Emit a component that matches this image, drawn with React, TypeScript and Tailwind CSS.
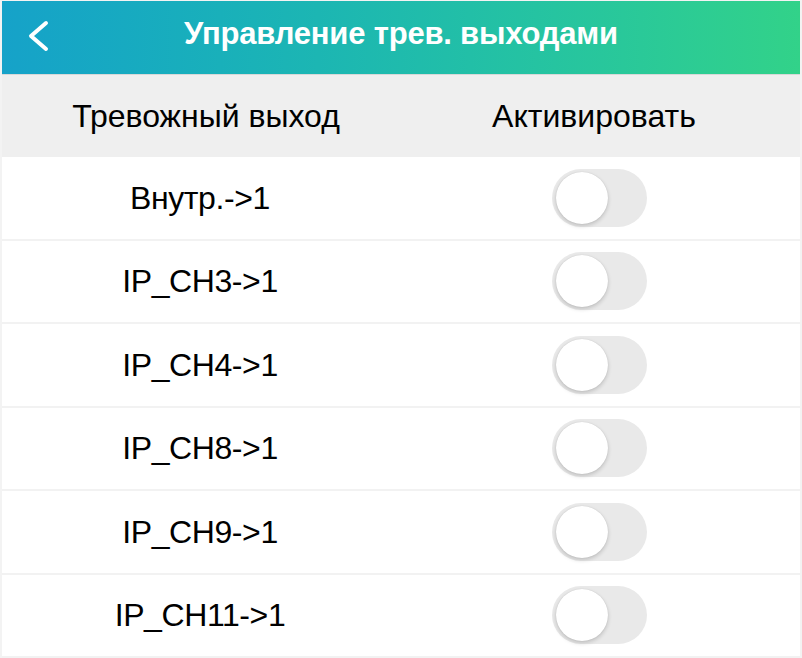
import React from "react";

const rows = [
	"Внутр.->1",
	"IP_CH3->1",
	"IP_CH4->1",
	"IP_CH8->1",
	"IP_CH9->1",
	"IP_CH11->1",
];

const Toggle = () => (
	<div className="relative h-[58px] w-[95px] rounded-full bg-[#e9e9e9]">
		<div className="absolute left-[4px] top-[3px] h-[52px] w-[52px] rounded-full bg-white shadow-[0_2px_4px_rgba(0,0,0,0.18),0_0_1px_rgba(0,0,0,0.15)]" />
	</div>
);

export default function App() {
	return (
		<div
			className="h-[658px] w-[802px] overflow-hidden bg-[#f3f3f3] px-[2px] pt-px"
			style={{ fontFamily: '"Liberation Sans", Arial, sans-serif' }}
		>
			<div className="relative flex h-[73px] items-center justify-center bg-gradient-to-r from-[#16a2c9] to-[#32d289] pb-[6px]">
				<svg
					className="absolute left-[22px] top-[19px]"
					width="28"
					height="32"
					viewBox="0 0 28 32"
					fill="none"
				>
					<path
						d="M22 3 L7 16 L22 29"
						stroke="white"
						strokeWidth="4"
						strokeLinecap="round"
						strokeLinejoin="round"
					/>
				</svg>
				<h1 className="text-[31px] font-bold tracking-[-0.2px] text-white">
					Управление трев. выходами
				</h1>
			</div>
			<div className="flex h-[83px] items-center border-t border-[#d8d8d8] bg-[#efefef] text-[32px] text-black">
				<div className="w-[408px] text-center">Тревожный выход</div>
				<div className="flex-1 pr-[22px] text-center">Активировать</div>
			</div>
			<div className="bg-white">
				{rows.map((name, i) => (
					<div
						key={i}
						className="flex h-[83.5px] items-center border-b-2 border-[#f2f2f2] text-[32px] text-black"
					>
						<div className="w-[396px] text-center tracking-[-0.4px]">{name}</div>
						<div className="flex flex-1 justify-center">
							<Toggle />
						</div>
					</div>
				))}
			</div>
		</div>
	);
}
